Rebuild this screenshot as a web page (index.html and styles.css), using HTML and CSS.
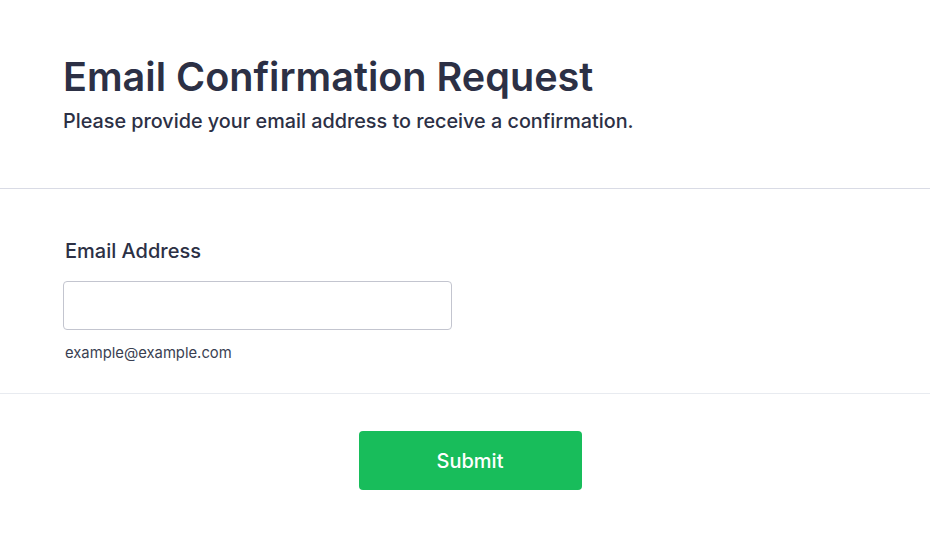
FILE: index.html
```html
<!DOCTYPE html>
<html lang="en">
<head>
    <meta charset="UTF-8">
    <meta name="viewport" content="width=device-width, initial-scale=1.0">
    <title>Email Confirmation Request</title>
    <link rel="stylesheet" href="styles.css">
</head>
<body>
    <div class="form-page">
        <div class="form-header">
            <h1>Email Confirmation Request</h1>
            <p class="subtitle">Please provide your email address to receive a confirmation.</p>
        </div>
        <form id="confirmForm">
            <div class="form-body">
                <div class="input-group">
                    <label for="email">Email Address</label>
                    <input type="email" id="email">
                    <span class="hint">example@example.com</span>
                </div>
            </div>
            <div class="form-footer">
                <button type="submit" class="submit-btn">Submit</button>
            </div>
        </form>
    </div>
</body>
</html>
```

FILE: styles.css
```css
:root {
    --text-color: #2c3045;
    --submit-color: #18bd5b;
}

body {
    font-family: Inter, 'Noto Sans', sans-serif;
    margin: 0;
    padding: 0;
    background: #ffffff;
    color: var(--text-color);
}

.form-header {
    padding: 53px 63px 54px;
    border-bottom: 1px solid #d9dbe5;
}

h1 {
    font-size: 39.6px;
    font-weight: 600;
    line-height: 48px;
    margin: 0;
}

.subtitle {
    font-size: 19.8px;
    font-weight: 500;
    line-height: 26px;
    margin: 7px 0 0;
}

.form-body {
    padding: 49px 63px 30px;
    border-bottom: 1px solid #e8ebf0;
}

.input-group label {
    display: block;
    font-size: 20px;
    font-weight: 500;
    line-height: 26px;
    margin: 0 0 17px 2px;
}

.input-group input {
    display: block;
    width: 389px;
    height: 49px;
    box-sizing: border-box;
    border: 1px solid #c3c5cf;
    border-radius: 4px;
    padding: 0 12px;
    font-size: 16px;
    font-family: inherit;
}

.hint {
    display: block;
    font-size: 14.8px;
    line-height: 19px;
    margin: 14px 0 0 2px;
    color: #3a3f52;
}

.form-footer {
    display: flex;
    justify-content: center;
    padding: 37px 0 0 10px;
}

.submit-btn {
    background: var(--submit-color);
    color: #ffffff;
    border: none;
    border-radius: 4px;
    width: 223px;
    height: 59px;
    font-family: inherit;
    font-size: 20px;
    font-weight: 500;
    cursor: pointer;
}
```
